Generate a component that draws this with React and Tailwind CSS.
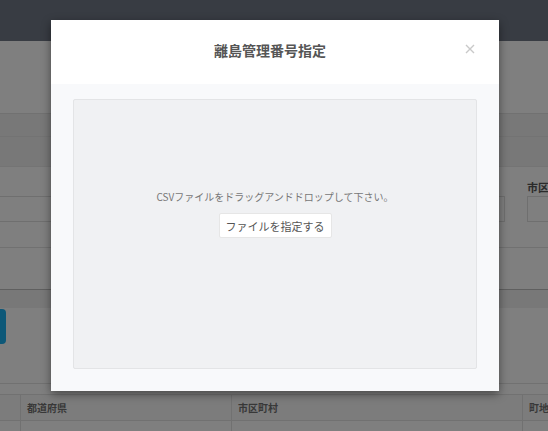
export default function App() {
  return (
    <div className="relative w-[548px] h-[431px] overflow-hidden bg-[#7f7f7f] font-['Noto_Sans_CJK_JP','Noto_Sans',sans-serif]">
      {/* background page (seen through the backdrop) */}
      <div className="h-[41px] bg-[#383c43]" />
      <div className="h-[72px]" />
      <div className="border-t border-[#717171] bg-[#787878]">
        <div className="h-[22px]" />
        <div className="h-[30px] border-t border-[#737373]" />
      </div>
      <div className="h-[82px] border-t border-[#747474] border-b border-b-[#717171] pt-[13px]">
        <div className="flex -ml-[20px] gap-[22px]">
          <div className="w-[265px] shrink-0">
            <div className="h-[14px]" />
            <div className="mt-[2px] h-[26px] border border-[#6f6f6f]" />
          </div>
          <div className="w-[238px] shrink-0">
            <div className="h-[14px] text-[11px] leading-[14px] font-bold text-[#2b2b2b]">町域</div>
            <div className="mt-[2px] h-[26px] border border-[#6f6f6f]" />
          </div>
          <div className="w-[120px] shrink-0">
            <div className="h-[14px] text-[11px] leading-[14px] font-bold text-[#2b2b2b] whitespace-nowrap">市区町村</div>
            <div className="mt-[2px] h-[26px] border border-[#6f6f6f]" />
          </div>
        </div>
      </div>
      <div className="h-[41px]" />
      <div className="h-[19px] border-t border-[#5f5f5f] bg-[#787878]" />
      <div className="h-[76px] border-b border-[#717171] pt-[1px]">
        <div className="-ml-[60px] w-[66px] h-[35px] rounded-[4px] bg-[#0d5878]" />
      </div>
      <div className="h-[10px]" />
      <div className="border-t border-[#717171]">
        <div className="flex h-[26px] border-b border-[#717171] bg-[#7c7c7c] text-[10px] font-bold text-[#383838]">
          <div className="w-[20px] shrink-0" />
          <div className="w-[211px] shrink-0 border-l border-[#717171] px-[6px] flex items-center">都道府県</div>
          <div className="w-[291px] shrink-0 border-l border-[#717171] px-[6px] flex items-center">市区町村</div>
          <div className="w-[100px] shrink-0 border-l border-[#717171] px-[6px] flex items-center whitespace-nowrap">町地域名</div>
        </div>
        <div className="flex h-[30px]">
          <div className="w-[20px] shrink-0" />
          <div className="w-[211px] shrink-0 border-l border-[#717171]" />
          <div className="w-[291px] shrink-0 border-l border-[#717171]" />
          <div className="w-[100px] shrink-0 border-l border-[#717171]" />
        </div>
      </div>

      {/* modal */}
      <div className="absolute left-[51px] top-[20px] w-[448px] h-[371px] flex flex-col bg-white shadow-[0_3px_9px_rgba(0,0,0,0.45)]">
        <div className="h-[64px] flex px-6 pt-[20px]">
          <div className="flex-1 text-center text-[14px] leading-[20px] font-bold text-[#555]">離島管理番号指定</div>
          <button className="w-[10px] h-[10px] mt-[4px] flex items-center justify-center">
            <svg width="10" height="10" viewBox="0 0 10 10">
              <path d="M1 1L9 9M9 1L1 9" stroke="#c9c9c9" strokeWidth="1.4" fill="none" />
            </svg>
          </button>
        </div>
        <div className="flex-1 flex flex-col bg-[#f8f9fb] px-[22px] pt-[15px] pb-[22px]">
          <div className="flex-1 flex flex-col items-center rounded-[2px] border border-[#e3e4e6] bg-[#f0f1f3] pt-[90px]">
            <div className="text-[10px] leading-[14px] text-[#777]">CSVファイルをドラッグアンドドロップして下さい。</div>
            <button className="mt-[9px] w-[113px] h-[25px] rounded-[2px] border border-[#e6e6e6] bg-white text-[11px] leading-[14px] text-[#555] flex items-center justify-center">
              ファイルを指定する
            </button>
          </div>
        </div>
      </div>
    </div>
  );
}
